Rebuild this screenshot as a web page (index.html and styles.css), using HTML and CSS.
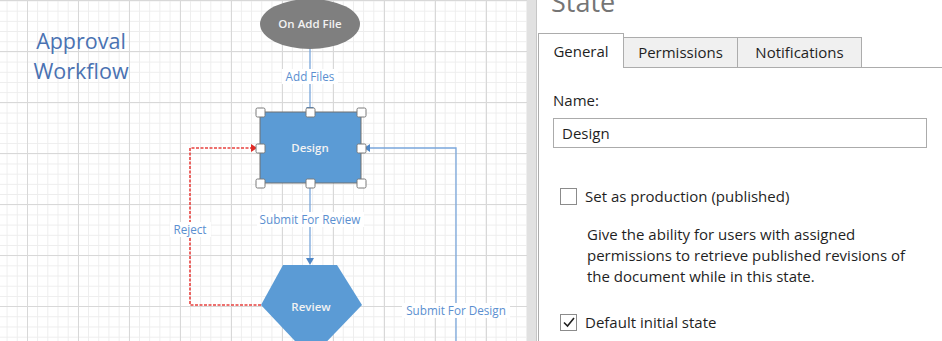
FILE: index.html
```html
<!DOCTYPE html>
<html lang="en">
<head>
  <meta charset="UTF-8">
  <title>Approval Workflow - State</title>
  <link rel="stylesheet" href="styles.css">
</head>
<body>

  <div class="app">
    <div class="canvas">
      <svg class="diagram" width="527" height="341" viewBox="0 0 527 341">
        <text class="title" x="81" y="49">Approval</text>
        <text class="title" x="81" y="79">Workflow</text>

        <!-- connectors -->
        <line class="link" x1="310" y1="49" x2="310" y2="108" />
        <line class="link" x1="310" y1="187" x2="310" y2="259" />
        <polygon class="head" points="306,258 314,258 310,265" />
        <polygon class="head" points="306,107 314,107 310,111" />
        <polyline class="link" points="366,148 456,148 456,341" />
        <polygon class="head" points="370,144 370,152 364,148" />
        <polyline class="reject" points="261,305 190,305 190,148 253,148" />
        <polygon class="head-red" points="251,144 251,152 257,148" />

        <!-- link labels -->
        <rect class="label-bg" x="282" y="69" width="56" height="15" />
        <text class="label" x="310" y="81">Add Files</text>
        <rect class="label-bg" x="257" y="212" width="107" height="15" />
        <text class="label" x="310" y="224">Submit For Review</text>
        <rect class="label-bg" x="170" y="222" width="41" height="15" />
        <text class="label" x="190" y="234">Reject</text>
        <rect class="label-bg" x="402" y="303" width="108" height="15" />
        <text class="label" x="456" y="315">Submit For Design</text>

        <!-- nodes -->
        <ellipse class="start" cx="310" cy="24" rx="50" ry="25" />
        <text class="node-text" x="310" y="28">On Add File</text>

        <rect class="state" x="260" y="112" width="101" height="71" />
        <text class="node-text" x="310" y="152">Design</text>

        <polygon class="state-plain" points="283,265 337,265 362,305 311,358 261,305" />
        <text class="node-text" x="311" y="311">Review</text>

        <!-- selection handles -->
        <g class="handles">
          <rect x="256" y="108" width="9" height="9" rx="1.5" />
          <rect x="306" y="108" width="9" height="9" rx="1.5" />
          <rect x="357" y="108" width="9" height="9" rx="1.5" />
          <rect x="256" y="144" width="9" height="9" rx="1.5" />
          <rect x="357" y="144" width="9" height="9" rx="1.5" />
          <rect x="256" y="179" width="9" height="9" rx="1.5" />
          <rect x="306" y="179" width="9" height="9" rx="1.5" />
          <rect x="357" y="179" width="9" height="9" rx="1.5" />
        </g>
      </svg>
    </div>

    <div class="splitter"></div>

    <div class="panel">
      <h1>State</h1>

      <div class="tabs">
        <div class="tab active">General</div>
        <div class="tab tab-perm">Permissions</div>
        <div class="tab tab-notify">Notifications</div>
      </div>

      <div class="pane">
        <label class="field-label">Name:</label>
        <input class="field" type="text" value="Design">

        <div class="check check-first">
          <span class="box"></span>
          <span>Set as production (published)</span>
        </div>
        <p class="hint">Give the ability for users with assigned permissions to retrieve published revisions of the document while in this state.</p>

        <div class="check check-last">
          <span class="box">
            <svg width="14" height="14" viewBox="0 0 14 14"><polyline points="2,7.5 5.5,11 12,3" /></svg>
          </span>
          <span>Default initial state</span>
        </div>
      </div>
    </div>
  </div>

</body>
</html>
```

FILE: styles.css
```css
html, body {
  margin: 0;
  height: 100%;
  overflow: hidden;
}

body {
  font-family: 'Open Sans', 'Noto Sans', sans-serif;
  background: #ffffff;
  color: #1f1f1f;
}

.app {
  display: flex;
  width: 942px;
  height: 341px;
  overflow: hidden;
}

/* diagram canvas */

.canvas {
  width: 527px;
  flex: none;
  background-color: #ffffff;
  background-image:
    linear-gradient(to right, #d8d8d8 1px, transparent 1px),
    linear-gradient(to bottom, #d8d8d8 1px, transparent 1px),
    linear-gradient(to right, #ededed 1px, transparent 1px),
    linear-gradient(to bottom, #ededed 1px, transparent 1px);
  background-size: 51px 51px, 51px 51px, 10.2px 10.2px, 10.2px 10.2px;
  background-position: 27px 0, 0 0, 6.6px 0, 0 0.5px;
}

.diagram {
  display: block;
}

.title {
  font-size: 21.5px;
  fill: #4a72b2;
  text-anchor: middle;
}

.link {
  fill: none;
  stroke: #79a6db;
  stroke-width: 1.3;
}

.reject {
  fill: none;
  stroke: #e8423f;
  stroke-width: 1.6;
  stroke-dasharray: 3 1.5;
}

.head {
  fill: #4f87c6;
}

.head-red {
  fill: #e02b27;
}

.label-bg {
  fill: #ffffff;
}

.label {
  font-size: 11.7px;
  fill: #5b8fd0;
  text-anchor: middle;
}

.start {
  fill: #7f7f7f;
}

.state {
  fill: #5b9bd5;
  stroke: #707070;
  stroke-width: 1;
}

.state-plain {
  fill: #5b9bd5;
}

.node-text {
  font-size: 11.5px;
  font-weight: 600;
  fill: #f2f2f2;
  text-anchor: middle;
}

.handles rect {
  fill: #ffffff;
  stroke: #7a7a7a;
  stroke-width: 1;
}

.splitter {
  width: 9px;
  flex: none;
  background: #e1e1e1;
  border-right: 1px solid #c6c6c6;
}

/* properties panel */

.panel {
  flex: 1;
  padding-left: 1px;
}

h1 {
  margin: -13px 0 16px 13px;
  font-size: 27px;
  line-height: 30px;
  font-weight: 400;
  color: #757575;
}

.tabs {
  display: flex;
  align-items: flex-end;
  height: 34px;
  border-bottom: 1px solid #acacac;
  font-size: 15px;
}

.tab {
  box-sizing: border-box;
  height: 30px;
  line-height: 29px;
  text-align: center;
  background: #f0f0f0;
  border: 1px solid #acacac;
  border-bottom: none;
  color: #1f1f1f;
}

.tab.active {
  width: 86px;
  height: 35px;
  margin-bottom: -1px;
  line-height: 35px;
  background: #ffffff;
}

.tab-perm {
  width: 114px;
  border-left: none;
}

.tab-notify {
  width: 124px;
  border-left: none;
}

.pane {
  border-left: 1px solid #acacac;
  padding-left: 14px;
  height: 300px;
  font-size: 15px;
}

.field-label {
  display: block;
  padding-top: 22px;
  line-height: 20px;
}

.field {
  display: block;
  box-sizing: border-box;
  width: 374px;
  height: 30px;
  margin-top: 8px;
  padding: 0 8px;
  border: 1px solid #ababab;
  font-family: inherit;
  font-size: 15px;
  color: #1f1f1f;
}

.check {
  display: flex;
  align-items: center;
  gap: 8px;
  padding-left: 7px;
  line-height: 20px;
}

.check-first {
  margin-top: 38px;
}

.check-last {
  margin-top: 25px;
}

.box {
  box-sizing: border-box;
  width: 17px;
  height: 17px;
  border: 1px solid #8b8b8b;
  background: #ffffff;
  display: flex;
  align-items: center;
  justify-content: center;
}

.box polyline {
  fill: none;
  stroke: #1f1f1f;
  stroke-width: 1.6;
}

.hint {
  margin: 18px 0 0;
  padding-left: 34px;
  width: 335px;
  line-height: 21px;
}
```
